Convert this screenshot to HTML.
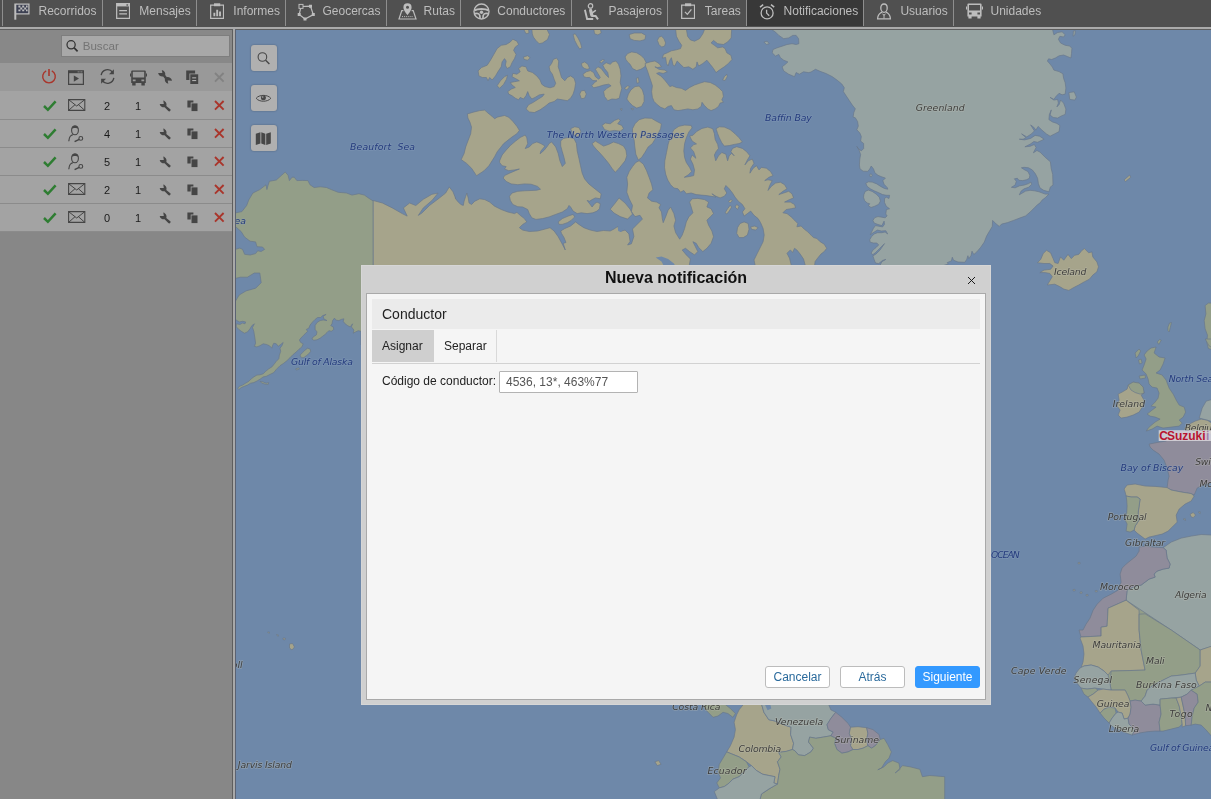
<!DOCTYPE html>
<html lang="es"><head><meta charset="utf-8"><title>Notificaciones</title>
<style>
*{box-sizing:border-box;margin:0;padding:0}
html,body{width:1211px;height:799px;overflow:hidden;background:#999;font-family:"Liberation Sans",Arial,sans-serif;}
#nav{position:absolute;left:0;top:0;width:1211px;height:27px;background:#505050;z-index:5}
#navline{position:absolute;left:0;top:26px;width:1211px;height:4px;background:#aaa;border-top:1px solid #505050;border-bottom:1px solid #5e5e5e;z-index:5}
.sep{position:absolute;top:0;width:1px;height:26px;background:#8e8e8e}
.act{position:absolute;top:0;height:26px;background:#383838}
.tl{filter:grayscale(1);position:absolute;top:3px;color:#bdbdbd;font-size:12px;line-height:16px;white-space:nowrap}
#left{position:absolute;left:0;top:29px;width:232px;height:770px;background:#878787;}
#srow{position:absolute;left:0;top:0;width:232px;height:34px;background:#888}
#sbox{position:absolute;left:61px;top:6px;width:169px;height:22px;background:#a8a8a8;border:1px solid #7e7e7e;color:#747474;font-size:11.6px;line-height:20px;padding-left:20.7px}
#hrow{position:absolute;left:0;top:34px;width:232px;height:28px;background:#999}
.rsep{position:absolute;left:0;width:232px;height:1px;background:#8b8b8b}
.row{position:absolute;left:0;width:232px;height:28px;background:#a3a3a3;font-size:11px;color:#1a1a1a}
.row b{position:absolute;top:1.5px;line-height:27px;font-weight:normal;width:20px;text-align:center}
.ic{position:absolute}
#div{position:absolute;left:232px;top:29px;width:4px;height:770px;background:#a8a8a8;border-left:1px solid #5e5e5e;border-right:1px solid #5b6272;z-index:6}
#map{position:absolute;left:235px;top:29px;width:976px;height:770px;background:#6e88a9;overflow:hidden}
.mbtn{position:absolute;left:16px;width:26px;height:26px;background:#b0b0b0;border-radius:3px;box-shadow:0 0 2px rgba(0,0,0,.3)}
#dlg{position:absolute;left:361px;top:265px;width:630px;height:440px;background:#d0d0d0;box-shadow:inset 0 0 0 1px #d6d6d6}
#dlg h1{position:absolute;left:0;top:3px;width:630px;text-align:center;font-size:16px;font-weight:bold;color:#111;line-height:20px}
#cls{position:absolute;left:606px;top:11px;width:9px;height:9px}
#body{position:absolute;left:5px;top:28px;width:620px;height:407px;background:#f5f5f5;border:1px solid #a9a9a9}
#sec{position:absolute;left:5px;top:5px;width:608px;height:30px;background:#ebebeb;font-size:14px;color:#222;line-height:30px;padding-left:10px}
#t1{position:absolute;left:5px;top:36px;width:62px;height:32px;background:#cfcfcf;font-size:12px;color:#222;line-height:32px;padding-left:10px}
#t2{position:absolute;left:67px;top:36px;width:63px;height:32px;border-right:1px solid #d9d9d9;font-size:12px;color:#222;line-height:32px;padding-left:10px}
#tl{position:absolute;left:5px;top:69px;width:608px;height:1px;background:#d2d2d2}
#lbl{position:absolute;left:15px;top:79px;font-size:12px;color:#222;line-height:16px;white-space:nowrap}
#inp{position:absolute;left:132px;top:77px;width:139px;height:22px;background:#fff;border:1px solid #b3b3b3;font-size:12px;color:#555;line-height:20px;padding-left:6px;border-radius:1px}
.btn{position:absolute;top:372px;height:22px;width:65px;border:1px solid #bcbcbc;background:#fff;border-radius:3px;font-size:12px;color:#2a6a9c;text-align:center;line-height:20px}
.btn.pri{background:#3399ff;border-color:#3399ff;color:#fff}
.row b,#lbl,#sec,#t1,#t2,#dlg h1,#inp,#sbox{filter:grayscale(1)}
.btn{filter:brightness(1.001)}
</style></head><body>
<div id="nav">
<div class="sep" style="left:2px"></div>
<div class="sep" style="left:102px"></div>
<svg class="ic" style="left:13.5px;top:2.5px" width="16" height="17" viewBox="0 0 16 17"><rect x="1.5" y="1" width="13.4" height="9.8" fill="#3c4052"/><path d="M1.3 0.5V16.7" fill="none" stroke="#bdbdbd" stroke-width="2" /><path d="M2 1.1H14.9V10.9H2" fill="none" stroke="#bdbdbd" stroke-width="1.3" /><path d="M4.4 2.6h2v1.9h-2zM8.2 2.6h2v1.9h-2zM6.3 4.5h1.9v1.9h-1.9zM10.2 4.5h1.9v1.9h-1.9zM4.4 6.4h2v1.9h-2zM8.2 6.4h2v1.9h-2zM12 2.6h1.6v1.9h-1.6zM12 6.4h1.6v1.9h-1.6z" fill="#bdbdbd"/></svg>
<span class="tl" style="left:38.5px">Recorridos</span>
<div class="sep" style="left:196px"></div>
<svg class="ic" style="left:115.6px;top:2.6px" width="14.2" height="16.1" viewBox="0 0 15 17"><path d="M0.7 0.7H14.3V16.3H0.7Z" fill="none" stroke="#bdbdbd" stroke-width="1.3" /><path d="M0.7 0.7H14.3V3.6H0.7Z" fill="#bdbdbd"/><rect x="11" y="1.4" width="1.8" height="1.4" fill="#505050"/><path d="M3.4 8H11.6M3.4 11.6H11.6" fill="none" stroke="#bdbdbd" stroke-width="1.3" /></svg>
<span class="tl" style="left:139.3px">Mensajes</span>
<div class="sep" style="left:285px"></div>
<svg class="ic" style="left:209.6px;top:2.7px" width="14.2" height="16.1" viewBox="0 0 15 17"><path d="M0.7 2.2H14.3V16.3H0.7Z" fill="none" stroke="#bdbdbd" stroke-width="1.3" /><path d="M4.2 0.3H10.8V3.4H4.2Z" fill="#bdbdbd"/><path d="M3.6 10.2h2v3.8h-2zM6.6 7.2h2v6.8h-2zM9.6 9h2v5h-2z" fill="#bdbdbd"/></svg>
<span class="tl" style="left:233.3px">Informes</span>
<div class="sep" style="left:386px"></div>
<svg class="ic" style="left:296.5px;top:2.5px" width="19" height="18" viewBox="0 0 19 18"><path d="M4 3.5L13.5 3.2L16.3 11.6L8 16L2.2 11.5Z" fill="none" stroke="#bdbdbd" stroke-width="1.2" /><rect x="2" y="1.4" width="4" height="4" fill="#505050" stroke="#bdbdbd" stroke-width="1"/><path d="M12 1.7h3v3h-3zM14.8 10.1h3v3h-3zM6.5 14.5h3v3h-3zM0.7 10h3v3h-3z" fill="#bdbdbd"/></svg>
<span class="tl" style="left:322.5px">Geocercas</span>
<div class="sep" style="left:460px"></div>
<svg class="ic" style="left:397.5px;top:1.5px" width="19" height="18" viewBox="0 0 19 18"><path d="M5.4 8.6H3.8L1 17H18L15.2 8.6H13.6" fill="none" stroke="#bdbdbd" stroke-width="1.2" /><path d="M9.5 13C9.5 13 5.4 8.4 5.4 5.4A4.1 4.1 0 0 1 13.6 5.4C13.6 8.4 9.5 13 9.5 13Z" fill="#bdbdbd"/><circle cx="9.5" cy="5.3" r="1.5" fill="#505050"/><path d="M4 14.6H15" fill="none" stroke="#bdbdbd" stroke-width="1" stroke-dasharray="1 1.1"/></svg>
<span class="tl" style="left:423.6px">Rutas</span>
<div class="sep" style="left:571px"></div>
<svg class="ic" style="left:472.5px;top:3px" width="17" height="17" viewBox="0 0 17 17"><circle cx="8.5" cy="8.5" r="7.5" fill="none" stroke="#bdbdbd" stroke-width="1.4"/><path d="M1.6 7.4C4.4 5.6 12.6 5.6 15.4 7.4" fill="none" stroke="#bdbdbd" stroke-width="2" /><path d="M2 10.6C4.6 9.9 6.2 10.4 6.8 12.4L7.1 15.6M15 10.6C12.4 9.9 10.8 10.4 10.2 12.4L9.9 15.6" fill="none" stroke="#bdbdbd" stroke-width="1.7" /><circle cx="8.5" cy="9.3" r="1.7" fill="#bdbdbd"/></svg>
<span class="tl" style="left:497.3px">Conductores</span>
<div class="sep" style="left:667px"></div>
<svg class="ic" style="left:584px;top:2.5px" width="16" height="17" viewBox="0 0 16 17"><circle cx="6.5" cy="2.9" r="2.2" fill="none" stroke="#bdbdbd" stroke-width="1.2"/><path d="M0.9 6.8L3.1 16H9.2" fill="none" stroke="#bdbdbd" stroke-width="1.9" /><path d="M6.6 7.4L7.8 12" fill="none" stroke="#bdbdbd" stroke-width="3.2" stroke-linecap="round"/><path d="M7.6 12.9H11.6L14 16.4" fill="none" stroke="#bdbdbd" stroke-width="2" /><path d="M8.6 9.6L11.4 7.6" fill="none" stroke="#bdbdbd" stroke-width="1.5" stroke-linecap="round"/></svg>
<span class="tl" style="left:608.6px">Pasajeros</span>
<div class="sep" style="left:746px"></div>
<svg class="ic" style="left:680.8px;top:2.7px" width="14.2" height="16.1" viewBox="0 0 15 17"><path d="M0.7 2.2H14.3V16.3H0.7Z" fill="none" stroke="#bdbdbd" stroke-width="1.3" /><path d="M4.2 0.3H10.8V3.4H4.2Z" fill="#bdbdbd"/><path d="M4.2 9.4L6.7 12L11 6.8" fill="none" stroke="#bdbdbd" stroke-width="1.4" /></svg>
<span class="tl" style="left:704.8px">Tareas</span>
<div class="act" style="left:747px;width:116px"></div>
<div class="sep" style="left:863px"></div>
<svg class="ic" style="left:759px;top:2.5px" width="17" height="17" viewBox="0 0 17 17"><circle cx="8.1" cy="9.9" r="6" fill="none" stroke="#bdbdbd" stroke-width="1.3"/><path d="M7.6 6.8V10.1L10.2 12.7" fill="none" stroke="#bdbdbd" stroke-width="1.3" /><path d="M1 4.2L4.2 1.6M15.2 4.2L12 1.6" fill="none" stroke="#bdbdbd" stroke-width="1.5" /></svg>
<span class="tl" style="left:783.6px">Notificaciones</span>
<div class="sep" style="left:953px"></div>
<svg class="ic" style="left:876px;top:2.5px" width="16" height="17" viewBox="0 0 16 17"><path d="M8 1C10.1 1 11.2 2.6 11.2 4.9C11.2 7.2 9.9 9.3 8 9.3C6.1 9.3 4.8 7.2 4.8 4.9C4.8 2.6 5.9 1 8 1Z" fill="none" stroke="#bdbdbd" stroke-width="1.3" /><path d="M6 9C4.4 10.4 1.8 10.4 1.6 15.9H14.4C14.2 10.4 11.6 10.4 10 9" fill="none" stroke="#bdbdbd" stroke-width="1.3" /><path d="M8 11.4V15.6M6.4 10.6L8 12.4L9.6 10.6" fill="none" stroke="#bdbdbd" stroke-width="1" /></svg>
<span class="tl" style="left:900.4px">Usuarios</span>
<svg class="ic" style="left:965.5px;top:3px" width="17" height="16" viewBox="0 0 17 16"><path d="M2.4 0.4H14.6Q15.6 0.4 15.6 1.4V13.4H14.6V15.6H11.4V13.4H5.6V15.6H2.4V13.4H1.4V1.4Q1.4 0.4 2.4 0.4ZM3 2V7.6H14V2ZM3 9.6V11.4H5.6V9.6ZM11.4 9.6V11.4H14V9.6Z" fill="#bdbdbd"/><path d="M0 3.4H1V6.6H0ZM16 3.4H17V6.6H16Z" fill="#bdbdbd"/></svg>
<span class="tl" style="left:990.5px">Unidades</span>
</div>
<div id="navline"></div>
<div id="left">
 <div id="srow"><div id="sbox">Buscar<svg class="ic" style="left:2px;top:2px" width="17" height="17" viewBox="0 0 17 17"><circle cx="7.1" cy="6.8" r="4.1" fill="none" stroke="#333" stroke-width="1.25"/><path d="M10.2 9.9L13.6 13.3" stroke="#333" stroke-width="1.7"/></svg></div></div>
 <div id="hrow"><svg class="ic" style="left:41px;top:5.4px" width="16" height="16" viewBox="0 0 16 16"><path d="M5.2 2.9A6.3 6.3 0 1 0 10.8 2.9" fill="none" stroke="#a9352b" stroke-width="1.4" /><path d="M8 0.9V8" fill="none" stroke="#a9352b" stroke-width="1.6" /></svg><svg class="ic" style="left:67.6px;top:6.5px" width="17" height="16" viewBox="0 0 17 16"><path d="M0.6 0.8H15.4V14.4H0.6Z" fill="none" stroke="#454545" stroke-width="1.2" /><path d="M0.6 0.8H15.4V3.2H0.6Z" fill="#454545"/><rect x="9.6" y="1.5" width="2" height="0.8" fill="#999"/><rect x="12.4" y="1.5" width="2" height="0.8" fill="#999"/><path d="M5.8 5.4L11 8.6L5.8 11.8Z" fill="#454545"/></svg><svg class="ic" style="left:98.5px;top:5.2px" width="17" height="17" viewBox="0 0 17 17"><path d="M2.2 7.2A6.4 6.4 0 0 1 13.6 4.2" fill="none" stroke="#454545" stroke-width="1.4" /><path d="M14.9 1.2V6.2H10Z" fill="#454545"/><path d="M14.8 9.8A6.4 6.4 0 0 1 3.4 12.8" fill="none" stroke="#454545" stroke-width="1.4" /><path d="M2.1 15.8V10.8H7Z" fill="#454545"/></svg><svg class="ic" style="left:129.6px;top:6.6px" width="17" height="16" viewBox="0 0 17 16"><path d="M2.2 0.4H14.8Q15.8 0.4 15.8 1.4V13H14.8V15.4H11.4V13H5.6V15.4H2.2V13H1.2V1.4Q1.2 0.4 2.2 0.4ZM2.8 1.8V7.6H14.2V1.8ZM2.8 9.4V11.2H5.6V9.4ZM11.4 9.4V11.2H14.2V9.4Z" fill="#454545"/><path d="M0 3.4H1V6.6H0ZM16 3.4H17V6.6H16Z" fill="#454545"/></svg><svg class="ic" style="left:157px;top:6px" width="16" height="16" viewBox="0 0 16 16"><path d="M4.8 0.9C7.6 1.5 8.7 4.2 8.2 5.9L9.9 8.2C11.8 7.7 14.5 9.1 15 11.7L10.7 11.5L11.3 14.7C8.5 14.2 7.4 11.4 7.9 9.7L6.2 7.4C4.3 7.9 1.6 6.6 1.1 3.9L5.4 4.1Z" fill="#454545"/></svg><svg class="ic" style="left:185.8px;top:6.8px" width="13" height="15" viewBox="0 0 13 15"><path d="M0.2 0.5H9.1V3.4H3.4V10.1H0.2Z" fill="#454545"/><path d="M4.3 4.3H12.2V14H4.3Z" fill="#454545"/><rect x="6.2" y="7.3" width="4" height="1.1" fill="#b0b0b0"/><rect x="6.2" y="10" width="4" height="1.1" fill="#b0b0b0"/></svg><svg class="ic" style="left:213.6px;top:8.6px" width="11" height="11" viewBox="0 0 11 11"><path d="M1 1L9.6 9.6M9.6 1L1 9.6" fill="none" stroke="#828282" stroke-width="1.9" /></svg></div>
<div class="row" style="top:62px"><svg class="ic" style="left:42.6px;top:9px" width="14" height="12" viewBox="0 0 14 12"><path d="M1 6L4.9 9.8L12.6 1.4" fill="none" stroke="#2e7d32" stroke-width="2.5" /></svg><svg class="ic" style="left:67.9px;top:8.3px" width="18" height="13" viewBox="0 0 18 13"><path d="M0.6 0.6H16.8V11.4H0.6Z" fill="none" stroke="#454545" stroke-width="1.1" /><path d="M0.8 0.8L8.7 7L16.6 0.8M0.8 11.2L7 5.7M16.6 11.2L10.4 5.7" fill="none" stroke="#454545" stroke-width="1" /></svg><b style="left:97px">2</b><b style="left:128px">1</b><svg class="ic" style="left:158.6px;top:8.6px" width="13" height="13" viewBox="0 0 13 13"><path d="M4.3 0.4C6.9 1.1 8.1 4 7.3 5.9L11.6 9.6C11.9 11 10.2 12 9.3 11L5.6 7.3C3.6 7.7 1 6.3 0.7 3.9L4.8 3.9Z" fill="#454545"/></svg><svg class="ic" style="left:186.6px;top:8.8px" width="11" height="12" viewBox="0 0 11 12"><path d="M0.4 0.4H6.4V2.6H3.7V7.6H0.4Z" fill="#454545"/><path d="M4.5 3.4H10.5V11.1H4.5Z" fill="#454545"/></svg><svg class="ic" style="left:214.1px;top:9.3px" width="11" height="11" viewBox="0 0 11 11"><path d="M1 1L9.6 9.6M9.6 1L1 9.6" fill="none" stroke="#a9352b" stroke-width="1.9" /></svg></div>
<div class="row" style="top:90px"><svg class="ic" style="left:42.6px;top:9px" width="14" height="12" viewBox="0 0 14 12"><path d="M1 6L4.9 9.8L12.6 1.4" fill="none" stroke="#2e7d32" stroke-width="2.5" /></svg><svg class="ic" style="left:68.4px;top:5.6px" width="16" height="18" viewBox="0 0 16 18"><path d="M7 1C9.2 1 10.4 2.8 10.4 5.2C10.4 7.6 9 9.8 7 9.8C5 9.8 3.6 7.6 3.6 5.2C3.6 2.8 4.8 1 7 1Z" fill="none" stroke="#454545" stroke-width="1.1" /><path d="M3.8 4C4 1.6 5.4 0.6 7 0.6C8.6 0.6 10 1.6 10.2 4C9 2.6 5 2.6 3.8 4Z" fill="#454545"/><path d="M4.8 9.6C2.4 10.4 1.2 11.4 0.8 16.2" fill="none" stroke="#454545" stroke-width="1.2" /><circle cx="12.8" cy="13.4" r="1.9" fill="none" stroke="#454545" stroke-width="1.1"/><path d="M11.2 14.4L6.6 16.6" fill="none" stroke="#454545" stroke-width="1.5" /></svg><b style="left:97px">4</b><b style="left:128px">1</b><svg class="ic" style="left:158.6px;top:8.6px" width="13" height="13" viewBox="0 0 13 13"><path d="M4.3 0.4C6.9 1.1 8.1 4 7.3 5.9L11.6 9.6C11.9 11 10.2 12 9.3 11L5.6 7.3C3.6 7.7 1 6.3 0.7 3.9L4.8 3.9Z" fill="#454545"/></svg><svg class="ic" style="left:186.6px;top:8.8px" width="11" height="12" viewBox="0 0 11 12"><path d="M0.4 0.4H6.4V2.6H3.7V7.6H0.4Z" fill="#454545"/><path d="M4.5 3.4H10.5V11.1H4.5Z" fill="#454545"/></svg><svg class="ic" style="left:214.1px;top:9.3px" width="11" height="11" viewBox="0 0 11 11"><path d="M1 1L9.6 9.6M9.6 1L1 9.6" fill="none" stroke="#a9352b" stroke-width="1.9" /></svg></div>
<div class="row" style="top:118px"><svg class="ic" style="left:42.6px;top:9px" width="14" height="12" viewBox="0 0 14 12"><path d="M1 6L4.9 9.8L12.6 1.4" fill="none" stroke="#2e7d32" stroke-width="2.5" /></svg><svg class="ic" style="left:68.4px;top:5.6px" width="16" height="18" viewBox="0 0 16 18"><path d="M7 1C9.2 1 10.4 2.8 10.4 5.2C10.4 7.6 9 9.8 7 9.8C5 9.8 3.6 7.6 3.6 5.2C3.6 2.8 4.8 1 7 1Z" fill="none" stroke="#454545" stroke-width="1.1" /><path d="M3.8 4C4 1.6 5.4 0.6 7 0.6C8.6 0.6 10 1.6 10.2 4C9 2.6 5 2.6 3.8 4Z" fill="#454545"/><path d="M4.8 9.6C2.4 10.4 1.2 11.4 0.8 16.2" fill="none" stroke="#454545" stroke-width="1.2" /><circle cx="12.8" cy="13.4" r="1.9" fill="none" stroke="#454545" stroke-width="1.1"/><path d="M11.2 14.4L6.6 16.6" fill="none" stroke="#454545" stroke-width="1.5" /></svg><b style="left:97px">5</b><b style="left:128px">1</b><svg class="ic" style="left:158.6px;top:8.6px" width="13" height="13" viewBox="0 0 13 13"><path d="M4.3 0.4C6.9 1.1 8.1 4 7.3 5.9L11.6 9.6C11.9 11 10.2 12 9.3 11L5.6 7.3C3.6 7.7 1 6.3 0.7 3.9L4.8 3.9Z" fill="#454545"/></svg><svg class="ic" style="left:186.6px;top:8.8px" width="11" height="12" viewBox="0 0 11 12"><path d="M0.4 0.4H6.4V2.6H3.7V7.6H0.4Z" fill="#454545"/><path d="M4.5 3.4H10.5V11.1H4.5Z" fill="#454545"/></svg><svg class="ic" style="left:214.1px;top:9.3px" width="11" height="11" viewBox="0 0 11 11"><path d="M1 1L9.6 9.6M9.6 1L1 9.6" fill="none" stroke="#a9352b" stroke-width="1.9" /></svg></div>
<div class="row" style="top:146px"><svg class="ic" style="left:42.6px;top:9px" width="14" height="12" viewBox="0 0 14 12"><path d="M1 6L4.9 9.8L12.6 1.4" fill="none" stroke="#2e7d32" stroke-width="2.5" /></svg><svg class="ic" style="left:67.9px;top:8.3px" width="18" height="13" viewBox="0 0 18 13"><path d="M0.6 0.6H16.8V11.4H0.6Z" fill="none" stroke="#454545" stroke-width="1.1" /><path d="M0.8 0.8L8.7 7L16.6 0.8M0.8 11.2L7 5.7M16.6 11.2L10.4 5.7" fill="none" stroke="#454545" stroke-width="1" /></svg><b style="left:97px">2</b><b style="left:128px">1</b><svg class="ic" style="left:158.6px;top:8.6px" width="13" height="13" viewBox="0 0 13 13"><path d="M4.3 0.4C6.9 1.1 8.1 4 7.3 5.9L11.6 9.6C11.9 11 10.2 12 9.3 11L5.6 7.3C3.6 7.7 1 6.3 0.7 3.9L4.8 3.9Z" fill="#454545"/></svg><svg class="ic" style="left:186.6px;top:8.8px" width="11" height="12" viewBox="0 0 11 12"><path d="M0.4 0.4H6.4V2.6H3.7V7.6H0.4Z" fill="#454545"/><path d="M4.5 3.4H10.5V11.1H4.5Z" fill="#454545"/></svg><svg class="ic" style="left:214.1px;top:9.3px" width="11" height="11" viewBox="0 0 11 11"><path d="M1 1L9.6 9.6M9.6 1L1 9.6" fill="none" stroke="#a9352b" stroke-width="1.9" /></svg></div>
<div class="row" style="top:174px"><svg class="ic" style="left:42.6px;top:9px" width="14" height="12" viewBox="0 0 14 12"><path d="M1 6L4.9 9.8L12.6 1.4" fill="none" stroke="#2e7d32" stroke-width="2.5" /></svg><svg class="ic" style="left:67.9px;top:8.3px" width="18" height="13" viewBox="0 0 18 13"><path d="M0.6 0.6H16.8V11.4H0.6Z" fill="none" stroke="#454545" stroke-width="1.1" /><path d="M0.8 0.8L8.7 7L16.6 0.8M0.8 11.2L7 5.7M16.6 11.2L10.4 5.7" fill="none" stroke="#454545" stroke-width="1" /></svg><b style="left:97px">0</b><b style="left:128px">1</b><svg class="ic" style="left:158.6px;top:8.6px" width="13" height="13" viewBox="0 0 13 13"><path d="M4.3 0.4C6.9 1.1 8.1 4 7.3 5.9L11.6 9.6C11.9 11 10.2 12 9.3 11L5.6 7.3C3.6 7.7 1 6.3 0.7 3.9L4.8 3.9Z" fill="#454545"/></svg><svg class="ic" style="left:186.6px;top:8.8px" width="11" height="12" viewBox="0 0 11 12"><path d="M0.4 0.4H6.4V2.6H3.7V7.6H0.4Z" fill="#454545"/><path d="M4.5 3.4H10.5V11.1H4.5Z" fill="#454545"/></svg><svg class="ic" style="left:214.1px;top:9.3px" width="11" height="11" viewBox="0 0 11 11"><path d="M1 1L9.6 9.6M9.6 1L1 9.6" fill="none" stroke="#a9352b" stroke-width="1.9" /></svg></div>
<div class="rsep" style="top:90px"></div>
<div class="rsep" style="top:118px"></div>
<div class="rsep" style="top:146px"></div>
<div class="rsep" style="top:174px"></div>
<div class="rsep" style="top:202px"></div>
</div>
<div id="div"></div>
<div id="map">
<svg width="976" height="770" viewBox="0 0 976 770" style="position:absolute;left:0;top:0">
<path d="M0.0 184.0L6.9 182.6L11.7 176.4L13.8 170.9L17.9 164.0L24.8 160.6L31.0 155.8L31.9 160.6L33.0 156.5L34.4 152.3L41.3 151.0L46.8 146.1L50.2 143.1L53.0 146.1L54.4 151.6L57.1 148.2L59.2 148.2L61.9 151.6L67.4 151.4L72.9 151.6L75.0 155.8L79.1 158.5L85.3 157.8L91.5 158.5L96.3 160.6L103.2 163.3L111.5 164.0L117.0 166.1L123.9 164.7L129.4 166.1L134.2 169.5L138.3 172.0L138.3 316.0L126.0 316.0L126.0 302.3L123.2 301.7L120.7 302.9L118.2 304.2L118.9 301.0L116.4 297.9L117.6 294.8L115.1 297.9L112.6 296.6L110.1 294.8L108.2 292.3L108.9 289.8L106.4 290.4L103.8 291.6L100.7 291.0L99.5 289.1L97.6 291.6L97.0 294.8L95.7 296.6L98.2 297.9L98.8 300.4L96.3 302.3L93.8 301.7L92.0 303.5L90.1 305.4L87.6 307.3L85.1 309.2L82.0 310.8L78.8 311.3L76.9 310.0L78.2 307.9L81.3 306.0L82.0 302.9L80.1 300.4L80.1 296.6L82.0 293.5L85.1 291.6L88.2 291.0L92.0 291.6L88.8 289.8L88.2 287.3L91.1 285.4L87.6 286.6L85.7 288.5L82.6 288.5L80.1 290.4L77.6 292.9L75.1 296.0L73.8 299.2L71.3 300.4L72.6 302.3L70.1 304.8L68.2 306.7L66.3 308.5L64.4 311.0L65.7 313.5L68.2 314.8L66.9 317.9L63.8 320.4L61.3 322.9L58.2 325.4L55.1 328.6L51.9 331.7L48.8 334.2L45.0 336.7L41.3 340.4L38.8 343.6L35.0 345.4L31.3 347.3L28.2 347.9L25.6 349.8L22.5 351.7L18.8 353.6L15.6 354.2L12.5 356.1L9.4 357.3L6.3 358.6L3.8 360.5L2.8 359.2L4.4 357.3L7.5 356.1L10.6 354.2L13.8 352.3L16.3 349.8L18.8 347.9L21.9 346.1L25.0 345.8L28.2 344.8L30.7 342.3L33.8 339.8L36.9 337.9L39.4 334.8L41.3 332.3L43.8 329.8L44.4 326.1L45.7 322.3L45.0 319.2L46.9 316.7L48.2 313.5L45.7 315.4L43.2 317.3L41.3 314.8L38.8 314.2L37.5 316.7L36.9 319.2L34.4 316.7L31.3 315.4L28.2 314.8L25.0 316.7L21.9 317.9L19.4 317.3L20.6 314.2L20.0 309.8L19.4 306.0L18.8 302.3L17.5 298.5L19.4 294.8L16.9 296.6L15.0 299.8L12.5 302.9L9.4 304.2L6.3 302.3L3.8 300.4L1.3 297.9L1.3 294.8L5.0 295.4L7.5 294.1L10.0 294.8L10.6 292.9L7.5 292.3L4.4 292.9L1.9 291.6L0.0 289.8L0.0 273.0L4.1 266.1L11.0 261.9L20.7 259.2L26.2 253.7L24.8 244.0L19.3 244.0L12.4 248.2L5.5 248.2L0.0 249.5L0.0 220.4L4.8 219.1L7.6 220.4L9.6 225.3L15.1 226.0L20.6 224.6L22.7 221.8L26.1 222.5L29.6 220.4L27.5 218.0L22.0 217.7L20.6 212.9L15.1 212.2L9.6 208.1L6.2 202.6L1.4 198.4L0.0 198.4Z" fill="#939e88" stroke="#68788a" stroke-width=".9" stroke-opacity=".75" stroke-linejoin="round"/>
<path d="M65.1 326.1L67.6 323.6L70.1 321.0L72.6 319.2L75.1 320.0L75.7 322.3L73.8 324.8L71.3 326.7L68.8 328.6L66.3 328.8Z" fill="#939e88" stroke="#68788a" stroke-width=".9" stroke-opacity=".75" stroke-linejoin="round"/>
<path d="M60.7 339.8L63.8 338.8L64.4 340.1L61.3 341.1Z" fill="#939e88" stroke="#68788a" stroke-width=".9" stroke-opacity=".75" stroke-linejoin="round"/>
<path d="M25.0 352.3L28.2 353.0L31.3 354.2L33.8 353.6L33.2 355.5L30.0 355.1L26.9 354.2Z" fill="#939e88" stroke="#68788a" stroke-width=".9" stroke-opacity=".75" stroke-linejoin="round"/>
<path d="M138.2 171.5L147.4 174.0L157.3 178.9L167.2 184.6L172.2 187.1L168.4 178.9L174.6 174.0L180.8 176.5L188.3 170.3L196.9 165.3L203.1 164.1L196.9 171.5L188.3 178.9L183.3 186.4L187.0 183.9L194.5 176.5L204.4 169.0L210.6 164.1L214.3 157.9L218.0 162.8L220.5 169.0L220.0 168.9L222.5 172.2L225.8 175.5L228.3 176.4L229.1 172.2L230.7 167.3L231.9 164.0L233.2 168.9L234.0 173.9L236.5 175.5L239.8 172.2L244.8 169.8L249.7 170.6L254.7 173.1L259.6 177.2L266.2 180.5L272.8 183.0L279.5 184.6L281.9 183.3L285.2 186.3L289.4 189.6L291.8 192.9L287.7 195.4L284.4 198.7L287.7 201.1L294.3 202.5L302.6 202.0L309.2 200.3L315.0 198.7L319.1 202.0L323.2 207.7L327.3 215.2L330.3 221.0L328.2 214.3L331.0 213.5L329.0 208.6L326.5 204.4L325.7 202.0L329.8 199.5L335.6 197.0L340.6 192.9L343.9 195.4L348.8 198.7L355.4 201.1L362.0 202.5L368.6 201.5L375.2 202.0L379.0 200.0L382.7 197.5L385.2 202.5L390.1 201.1L393.9 204.9L395.1 212.4L392.6 216.0L396.4 214.8L398.9 207.4L397.5 200.0L401.3 196.2L407.4 190.1L405.0 186.3L400.0 187.6L396.4 182.6L397.5 176.4L394.2 169.8L391.8 163.2L392.6 154.9L391.8 148.3L394.2 142.5L397.5 137.6L400.8 133.4L404.1 131.8L408.3 135.1L411.6 141.7L414.1 148.3L416.5 154.9L417.9 160.7L414.1 164.0L412.5 168.9L416.6 172.2L421.6 173.1L425.7 175.5L424.0 178.8L426.5 183.0L427.3 189.6L428.2 193.7L430.6 187.9L433.1 181.3L435.6 178.0L438.9 184.6L440.6 191.2L438.9 197.0L440.6 203.6L444.7 210.2L447.2 206.1L449.6 199.5L451.3 192.9L453.8 187.9L457.9 183.8L456.2 178.0L454.6 173.1L457.1 169.8L462.8 169.4L469.5 170.6L473.6 173.1L471.9 178.0L476.1 179.7L478.5 184.6L475.2 187.9L471.9 191.2L473.6 196.2L476.9 202.0L478.5 207.7L476.1 214.3L471.9 219.3L467.8 222.6L463.7 218.5L461.2 214.3L457.9 212.7L460.4 217.7L462.8 222.6L459.5 225.9L454.6 222.6L450.5 219.3L447.2 221.0L451.3 225.9L455.4 230.0L453.8 239.1L455.0 316.0L138.3 316.0Z" fill="#a6a48b" stroke="#68788a" stroke-width=".9" stroke-opacity=".75" stroke-linejoin="round"/>
<path d="M420.7 228.4L426.5 227.6L433.1 230.0L438.9 234.5L441.4 239.1L429.8 239.1L426.5 232.5Z" fill="#6e88a9"/>
<path d="M232.4 84.9L238.2 83.2L244.8 81.6L249.7 81.1L253.0 84.1L257.2 87.4L259.6 89.8L262.1 88.2L265.4 87.4L269.5 86.5L273.7 88.2L277.8 92.3L281.9 97.3L284.4 101.4L281.9 104.7L277.0 108.0L272.8 111.3L268.7 114.6L265.4 118.7L262.1 122.9L259.6 127.8L253.9 136.8L249.0 141.8L241.5 146.7L236.6 139.3L231.6 134.4L226.2 130.6L229.1 124.5L230.7 117.9L233.2 111.3L235.7 104.7L236.5 98.1L234.9 93.1L232.9 89.0Z" fill="#a6a48b" stroke="#68788a" stroke-width=".9" stroke-opacity=".75" stroke-linejoin="round"/>
<path d="M264.6 131.8L267.1 126.0L271.2 121.0L275.3 116.6L280.3 112.3L285.2 108.5L290.2 106.0L291.8 108.8L292.7 114.6L290.2 119.6L294.3 117.9L297.6 114.6L301.8 112.9L305.9 114.6L310.0 117.1L305.9 122.0L305.1 124.8L309.2 121.2L312.5 117.1L314.1 114.6L316.6 112.9L320.7 117.9L323.2 124.5L324.9 131.8L327.3 137.6L330.3 134.3L329.0 128.5L327.3 122.7L325.7 116.9L325.7 112.0L328.2 109.5L334.0 108.3L338.9 109.5L341.4 114.4L342.2 121.9L343.9 129.3L345.5 136.7L347.2 144.2L349.6 149.9L353.8 154.9L357.9 158.2L362.0 161.5L366.2 164.8L365.3 169.8L360.4 168.9L357.1 170.6L354.6 172.2L352.1 171.4L354.6 174.7L357.1 178.0L359.6 174.7L362.0 173.1L365.3 174.7L364.5 179.7L362.0 182.1L357.9 183.8L352.1 184.6L346.3 183.8L342.2 184.6L338.1 182.1L335.6 178.0L334.0 176.4L332.3 179.7L327.3 183.0L320.7 185.4L314.1 187.9L307.5 189.6L300.9 190.4L296.8 188.8L294.3 184.6L292.7 180.5L287.7 178.0L282.8 177.7L277.8 175.5L275.3 171.4L274.5 167.3L277.0 164.0L282.8 162.3L289.4 161.8L296.0 161.5L301.8 161.2L305.5 160.2L302.6 157.4L296.0 155.2L289.4 154.9L282.8 155.7L276.2 154.9L271.2 152.4L268.2 149.1L269.5 146.6L274.5 144.2L280.3 141.7L284.4 140.0L279.5 140.9L273.7 141.7L269.5 140.0L271.2 137.6L267.1 136.7L264.6 133.4Z" fill="#a6a48b" stroke="#68788a" stroke-width=".9" stroke-opacity=".75" stroke-linejoin="round"/>
<path d="M323.2 192.9L327.3 189.6L333.1 187.1L338.1 185.4L339.7 187.9L336.4 191.2L332.3 193.7L327.3 195.4L324.0 195.4Z" fill="#a6a48b" stroke="#68788a" stroke-width=".9" stroke-opacity=".75" stroke-linejoin="round"/>
<path d="M335.6 99.7L339.7 97.8L343.9 98.6L345.8 102.2L344.7 106.3L341.4 108.0L338.1 105.5Z" fill="#a6a48b" stroke="#68788a" stroke-width=".9" stroke-opacity=".75" stroke-linejoin="round"/>
<path d="M375.2 180.2L380.2 174.1L384.0 168.9L390.1 174.1L395.1 180.2L397.5 185.1L392.6 190.1L385.2 187.6L379.0 184.0Z" fill="#a6a48b" stroke="#68788a" stroke-width=".9" stroke-opacity=".75" stroke-linejoin="round"/>
<path d="M382.7 198.2L385.6 197.5L387.8 200.3L386.0 203.1L383.2 202.1Z" fill="#6e88a9"/>
<path d="M357.1 114.6L360.4 112.1L364.5 114.6L368.6 117.1L373.6 115.4L378.5 113.0L383.5 114.6L388.5 117.1L390.9 121.0L391.8 126.8L390.1 131.8L386.8 135.9L383.5 140.0L380.2 143.3L376.9 139.2L373.6 134.3L369.5 129.3L365.3 124.4L361.2 120.2L358.4 116.9Z" fill="#a6a48b" stroke="#68788a" stroke-width=".9" stroke-opacity=".75" stroke-linejoin="round"/>
<path d="M367.0 96.4L370.3 94.0L375.2 94.8L379.4 91.5L383.5 89.8L385.2 91.5L382.7 94.8L386.8 96.4L388.5 99.7L385.2 102.2L379.4 101.4L374.4 102.2L369.5 100.6Z" fill="#a6a48b" stroke="#68788a" stroke-width=".9" stroke-opacity=".75" stroke-linejoin="round"/>
<path d="M397.5 99.7L400.0 94.8L404.1 90.7L409.9 89.0L416.5 89.3L421.5 92.3L426.4 94.8L425.6 99.7L423.1 104.7L419.8 110.5L417.4 114.6L413.2 117.9L409.9 123.5L406.6 128.5L403.3 131.0L400.8 125.2L399.7 116.9L399.2 111.3L397.5 106.3Z" fill="#a6a48b" stroke="#68788a" stroke-width=".9" stroke-opacity=".75" stroke-linejoin="round"/>
<path d="M243.1 41.9L246.4 38.6L252.2 36.2L255.5 31.2L258.8 25.4L262.1 19.6L266.2 16.3L271.2 15.5L275.3 13.0L277.8 10.2L281.9 12.2L283.6 15.5L280.3 18.0L278.6 21.3L281.1 25.4L279.5 29.6L277.0 33.7L275.3 37.8L272.0 39.5L270.4 36.2L271.2 32.0L269.5 29.6L267.1 32.9L266.2 37.8L262.9 42.8L260.5 46.9L257.2 51.0L254.7 48.5L253.0 51.8L251.4 48.5L247.3 48.5L243.9 46.9Z" fill="#a6a48b" stroke="#68788a" stroke-width=".9" stroke-opacity=".75" stroke-linejoin="round"/>
<path d="M262.1 56.8L265.4 51.8L269.5 47.7L272.5 46.1L271.5 50.2L268.7 55.2L264.6 59.3Z" fill="#a6a48b" stroke="#68788a" stroke-width=".9" stroke-opacity=".75" stroke-linejoin="round"/>
<path d="M288.5 27.9L292.7 26.7L295.1 28.7L292.7 31.2L289.0 30.4Z" fill="#a6a48b" stroke="#68788a" stroke-width=".9" stroke-opacity=".75" stroke-linejoin="round"/>
<path d="M272.8 62.6L276.2 60.1L280.3 58.5L277.0 56.0L275.3 53.5L279.5 52.7L284.4 51.8L280.3 49.4L277.0 47.7L277.8 44.4L281.9 45.2L285.2 42.8L283.6 39.5L286.9 37.0L291.0 37.8L292.7 41.9L297.6 43.6L301.8 46.9L305.1 51.0L306.7 55.2L310.0 57.6L315.0 58.8L319.1 57.6L320.7 54.3L319.1 50.2L317.4 45.2L315.0 41.9L314.1 37.8L316.6 34.5L318.3 30.4L321.6 29.1L323.7 32.0L323.2 37.8L324.9 42.8L326.5 48.5L329.8 51.8L332.3 48.5L335.6 46.9L339.2 49.4L340.6 54.3L339.7 60.1L338.1 65.1L335.6 69.2L332.3 71.7L327.3 70.8L322.4 70.0L319.1 72.5L314.1 74.1L310.0 77.4L305.1 80.8L299.3 83.6L294.3 82.9L291.0 79.9L293.5 75.8L298.4 73.3L303.4 70.0L307.5 67.5L309.2 65.1L304.2 65.9L300.1 68.4L296.8 70.0L294.3 66.7L292.7 62.6L291.0 66.7L288.5 70.0L285.2 68.4L283.6 70.8L280.3 69.2L277.0 66.7L273.7 65.1Z" fill="#a6a48b" stroke="#68788a" stroke-width=".9" stroke-opacity=".75" stroke-linejoin="round"/>
<path d="M344.7 65.1L346.3 61.8L349.6 61.4L351.3 65.1L349.6 69.2L346.3 69.7Z" fill="#a6a48b" stroke="#68788a" stroke-width=".9" stroke-opacity=".75" stroke-linejoin="round"/>
<path d="M296.8 -0.2L311.7 -0.2L314.5 5.6L312.5 10.6L307.5 13.9L304.2 14.7L300.9 11.4L298.4 8.1L297.3 4.8Z" fill="#a6a48b" stroke="#68788a" stroke-width=".9" stroke-opacity=".75" stroke-linejoin="round"/>
<path d="M288.5 -0.2L293.5 -0.2L294.0 4.0L291.0 4.8Z" fill="#a6a48b" stroke="#68788a" stroke-width=".9" stroke-opacity=".75" stroke-linejoin="round"/>
<path d="M338.1 5.6L340.2 4.8L343.0 8.9L345.5 13.9L346.8 18.8L344.7 20.1L342.2 16.3L339.7 11.4Z" fill="#a6a48b" stroke="#68788a" stroke-width=".9" stroke-opacity=".75" stroke-linejoin="round"/>
<path d="M358.7 -0.2L365.3 -0.2L366.2 4.0L362.9 5.9L359.6 4.8Z" fill="#a6a48b" stroke="#68788a" stroke-width=".9" stroke-opacity=".75" stroke-linejoin="round"/>
<path d="M394.2 5.6L399.2 4.0L406.6 4.0L410.8 6.4L409.9 10.6L405.0 11.9L399.2 11.4L395.1 9.7Z" fill="#a6a48b" stroke="#68788a" stroke-width=".9" stroke-opacity=".75" stroke-linejoin="round"/>
<path d="M346.3 34.5L349.6 32.9L352.9 35.3L354.6 39.5L352.1 40.3L349.6 39.5L347.2 37.8Z" fill="#a6a48b" stroke="#68788a" stroke-width=".9" stroke-opacity=".75" stroke-linejoin="round"/>
<path d="M364.5 32.9L367.8 30.4L369.5 31.2L366.2 34.0Z" fill="#a6a48b" stroke="#68788a" stroke-width=".9" stroke-opacity=".75" stroke-linejoin="round"/>
<path d="M348.0 45.2L351.3 42.8L355.4 41.6L358.7 43.6L360.4 47.7L363.7 50.2L365.3 48.5L362.9 44.4L360.4 40.3L362.9 37.8L366.2 39.5L368.6 42.8L371.1 46.1L373.6 48.5L372.8 43.6L369.5 39.5L367.8 36.2L371.1 33.7L375.2 35.3L377.7 32.9L381.0 32.0L383.5 35.3L385.2 40.3L386.0 46.9L385.2 53.5L386.8 59.3L385.2 65.1L384.3 69.2L381.0 70.3L376.9 70.0L372.8 71.7L369.5 67.5L368.6 62.6L371.9 59.3L376.1 56.8L373.6 55.2L368.6 56.0L363.7 57.6L358.7 58.8L356.7 56.8L359.6 53.5L362.0 51.8L357.9 51.5L354.6 48.5L351.3 48.5L348.8 47.7Z" fill="#a6a48b" stroke="#68788a" stroke-width=".9" stroke-opacity=".75" stroke-linejoin="round"/>
<path d="M391.8 70.0L393.4 65.1L395.9 60.9L400.0 57.6L404.1 57.1L407.4 60.9L409.1 66.7L409.1 72.5L406.6 77.4L401.7 79.1L397.5 76.6L394.2 73.3Z" fill="#a6a48b" stroke="#68788a" stroke-width=".9" stroke-opacity=".75" stroke-linejoin="round"/>
<path d="M389.3 59.3L392.6 56.8L394.7 57.6L391.8 60.9Z" fill="#a6a48b" stroke="#68788a" stroke-width=".9" stroke-opacity=".75" stroke-linejoin="round"/>
<path d="M401.3 49.4L403.3 48.5L404.1 53.5L402.0 54.3Z" fill="#a6a48b" stroke="#68788a" stroke-width=".9" stroke-opacity=".75" stroke-linejoin="round"/>
<path d="M385.2 79.9L387.1 79.6L386.5 81.6Z" fill="#a6a48b" stroke="#68788a" stroke-width=".9" stroke-opacity=".75" stroke-linejoin="round"/>
<path d="M395.9 79.6L398.4 79.3L398.0 81.1Z" fill="#a6a48b" stroke="#68788a" stroke-width=".9" stroke-opacity=".75" stroke-linejoin="round"/>
<path d="M390.1 27.9L392.6 24.6L396.7 22.9L401.7 23.8L405.8 26.3L409.1 29.6L411.2 33.7L409.9 37.8L405.8 40.3L401.7 41.6L397.5 39.5L395.1 35.3L392.6 32.9L390.9 30.4Z" fill="#a6a48b" stroke="#68788a" stroke-width=".9" stroke-opacity=".75" stroke-linejoin="round"/>
<path d="M422.4 11.4L424.0 8.1L426.5 7.3L429.0 9.7L430.6 13.9L429.5 17.2L426.5 18.0L424.0 15.5Z" fill="#a6a48b" stroke="#68788a" stroke-width=".9" stroke-opacity=".75" stroke-linejoin="round"/>
<path d="M410.0 34.5L415.0 32.9L419.9 32.0L424.0 34.5L426.5 37.8L422.4 38.6L419.9 37.8L424.0 40.3L429.8 41.1L432.3 42.8L428.2 44.4L424.0 43.6L421.6 44.4L425.7 46.9L429.0 50.2L432.3 54.3L434.8 57.6L437.3 56.8L441.4 58.5L446.3 59.3L450.5 61.4L454.6 58.5L459.5 56.0L464.5 54.3L469.5 52.7L475.2 53.5L480.2 56.0L484.3 59.3L487.6 62.6L488.4 67.5L486.8 70.8L488.4 73.3L485.1 74.1L483.5 77.4L480.2 79.9L476.1 81.6L472.8 79.9L469.5 76.6L467.0 73.3L466.2 77.4L462.8 79.9L457.9 80.8L452.9 79.9L448.0 80.8L443.0 81.6L438.9 80.8L436.4 76.6L433.1 77.4L429.8 79.9L425.7 78.3L422.4 75.8L419.1 72.5L417.4 68.4L416.6 62.6L417.4 56.8L415.8 51.8L414.1 46.9L412.5 41.9L410.8 37.8Z" fill="#a6a48b" stroke="#68788a" stroke-width=".9" stroke-opacity=".75" stroke-linejoin="round"/>
<path d="M487.6 51.0L489.3 47.7L491.8 45.2L492.2 47.7L490.1 51.5Z" fill="#a6a48b" stroke="#68788a" stroke-width=".9" stroke-opacity=".75" stroke-linejoin="round"/>
<path d="M440.6 -0.2L451.3 -0.2L452.6 7.3L455.4 10.9L459.5 12.2L464.5 9.7L467.8 4.8L469.8 -0.2L496.7 -0.2L496.2 8.9L492.6 13.0L488.4 15.5L482.7 14.7L478.5 11.4L476.1 13.9L479.4 16.3L482.7 18.8L487.6 18.0L490.1 19.6L491.8 23.8L495.9 26.3L497.0 30.4L493.4 34.5L489.3 37.8L484.3 41.1L481.0 43.6L478.5 39.5L475.2 35.3L471.9 31.2L467.8 34.5L463.7 37.0L462.0 32.9L461.2 37.8L457.9 40.3L453.8 37.8L448.8 38.6L445.5 35.3L442.2 32.0L439.7 37.0L438.1 36.2L436.4 28.7L434.8 31.2L433.1 37.0L431.5 34.5L430.6 28.4L427.3 29.1L428.5 25.4L432.3 23.8L436.4 21.8L441.4 20.8L445.5 19.6L446.7 16.3L443.9 12.2L441.4 7.3Z" fill="#a6a48b" stroke="#68788a" stroke-width=".9" stroke-opacity=".75" stroke-linejoin="round"/>
<path d="M432.3 149.9L430.6 145.0L429.5 138.4L429.8 131.8L431.5 123.5L433.1 115.3L435.6 107.0L438.9 100.6L443.9 97.3L449.6 96.1L456.2 96.4L457.1 98.9L453.8 103.0L451.3 108.8L449.6 114.6L448.8 122.0L449.6 128.5L451.3 133.4L454.6 138.4L456.7 142.5L453.3 145.8L449.3 148.3L454.6 147.5L458.7 146.6L459.5 140.9L457.9 135.1L455.4 130.1L457.1 126.0L460.9 129.3L458.7 122.7L455.4 118.9L458.7 115.6L461.5 114.9L457.1 112.0L454.6 107.0L457.9 106.3L462.0 102.2L467.0 99.4L472.8 98.1L477.7 99.7L479.4 104.7L480.2 110.5L482.7 115.4L483.5 119.4L481.0 122.7L479.4 126.0L480.7 131.8L483.5 126.8L486.8 123.5L490.9 125.2L492.6 131.8L494.2 126.8L496.7 124.3L499.2 126.8L495.9 122.7L497.5 119.4L501.7 117.7L507.4 119.4L511.6 122.7L514.9 126.8L512.4 130.9L509.9 135.9L513.2 131.8L517.3 130.1L519.0 134.3L515.7 139.2L514.9 144.2L518.2 139.2L521.5 136.7L524.0 140.9L526.4 138.4L531.4 139.2L535.5 142.5L538.0 146.6L533.9 148.3L529.7 151.6L533.0 150.8L537.2 151.6L534.7 156.5L533.0 161.5L536.3 157.4L540.5 154.1L545.4 153.2L549.6 155.7L552.0 159.8L547.9 162.3L543.8 165.6L548.7 164.0L553.7 162.3L557.0 164.8L558.6 168.9L554.5 170.6L549.6 173.1L555.3 173.1L559.5 175.5L560.6 178.8L556.2 179.7L551.2 180.5L547.9 183.8L552.0 184.6L556.2 187.9L559.5 191.2L562.8 194.5L561.9 197.8L566.1 197.0L569.4 200.3L572.7 202.8L576.0 206.1L578.5 208.6L581.8 209.4L585.1 212.7L589.2 215.2L591.7 219.3L589.2 222.6L585.9 225.1L582.6 229.2L580.1 232.5L579.3 239.1L571.0 239.1L568.5 230.0L565.2 225.1L561.9 221.0L559.5 219.3L557.8 223.4L555.3 221.0L552.0 224.3L554.5 229.2L557.0 239.1L520.7 239.1L519.0 230.9L522.3 224.3L525.6 217.7L528.1 212.7L529.2 206.1L528.1 199.5L525.6 193.7L523.1 189.6L519.0 186.3L515.7 182.1L512.4 184.6L509.1 187.1L507.4 183.0L509.9 179.7L507.4 175.5L503.3 172.2L500.0 168.1L497.5 164.0L494.2 159.8L490.9 156.5L489.3 159.8L491.8 164.0L489.3 167.3L485.1 168.9L481.0 167.3L476.9 164.8L481.0 168.1L476.1 167.3L471.1 166.5L466.2 166.1L461.2 165.6L456.2 164.0L451.3 164.8L448.8 161.5L445.5 163.2L443.0 159.8L438.9 159.0L435.6 155.7L433.1 151.6Z" fill="#a6a48b" stroke="#68788a" stroke-width=".9" stroke-opacity=".75" stroke-linejoin="round"/>
<path d="M481.0 99.7L484.3 97.8L489.3 98.1L495.1 100.6L500.0 104.7L504.1 108.8L507.4 113.0L504.1 114.6L499.2 115.4L494.2 116.6L489.3 117.1L486.8 113.8L484.3 108.8L482.7 104.7Z" fill="#a6a48b" stroke="#68788a" stroke-width=".9" stroke-opacity=".75" stroke-linejoin="round"/>
<path d="M501.7 204.4L502.5 198.7L505.0 194.5L509.1 192.9L513.2 194.5L514.0 200.3L512.4 206.1L508.3 208.6L504.1 208.6Z" fill="#a6a48b" stroke="#68788a" stroke-width=".9" stroke-opacity=".75" stroke-linejoin="round"/>
<path d="M515.7 197.8L519.8 197.0L523.1 198.7L520.7 201.1L516.5 200.3Z" fill="#a6a48b" stroke="#68788a" stroke-width=".9" stroke-opacity=".75" stroke-linejoin="round"/>
<path d="M490.1 183.8L492.6 179.7L495.1 176.4L496.7 178.0L494.2 182.1L491.8 185.0Z" fill="#a6a48b" stroke="#68788a" stroke-width=".9" stroke-opacity=".75" stroke-linejoin="round"/>
<path d="M500.0 178.0L501.7 175.5L504.1 177.2L502.5 180.5Z" fill="#a6a48b" stroke="#68788a" stroke-width=".9" stroke-opacity=".75" stroke-linejoin="round"/>
<path d="M493.4 172.2L495.9 170.6L497.5 171.7L495.1 173.9Z" fill="#a6a48b" stroke="#68788a" stroke-width=".9" stroke-opacity=".75" stroke-linejoin="round"/>
<path d="M535.5 -0.2L540.5 3.1L543.8 6.4L548.7 9.7L553.7 8.9L557.8 6.4L561.1 6.4L563.6 9.7L563.9 14.7L561.1 15.5L557.0 14.7L552.0 15.5L547.1 17.2L542.1 18.8L538.0 20.5L537.2 23.8L540.5 27.1L543.8 25.4L545.4 28.7L548.7 31.2L552.9 32.9L550.4 35.3L547.1 37.8L548.7 41.9L553.7 45.2L559.5 47.7L561.1 43.6L564.4 45.2L568.5 42.8L573.5 43.6L576.0 43.0L580.5 40.3L585.0 42.3L591.0 44.5L597.0 47.5L602.3 51.3L606.8 55.0L609.3 58.8L608.3 62.5L611.3 67.1L614.3 71.6L617.3 76.1L620.3 79.8L618.8 83.6L618.1 88.1L620.3 88.8L622.6 92.6L623.3 97.1L621.8 100.8L624.8 103.9L626.3 107.6L625.6 112.1L628.6 114.4L628.6 119.6L626.3 121.9L623.3 119.6L621.8 117.4L624.1 121.1L625.6 125.6L624.8 130.1L624.4 136.0L625.0 139.9L628.2 142.2L632.7 142.4L634.7 140.1L636.2 137.0L638.5 139.9L639.8 143.7L643.0 146.3L646.9 147.9L650.4 149.1L647.8 151.7L649.1 155.3L652.5 158.9L652.7 160.2L649.5 159.5L645.6 157.4L641.8 154.9L637.2 153.1L633.4 152.8L630.8 154.3L632.1 157.3L635.3 159.8L639.2 161.8L643.7 163.7L647.6 165.6L651.4 166.3L654.6 166.3L654.0 169.5L651.4 168.2L649.5 169.5L649.5 173.4L651.2 177.2L654.6 179.8L651.4 180.5L650.8 185.0L652.1 186.9L650.1 188.8L646.9 188.2L643.0 187.6L639.8 188.6L637.9 191.4L639.2 194.0L643.0 195.5L646.9 196.6L649.1 192.1L649.5 195.3L647.6 197.9L643.7 197.2L640.5 196.6L638.5 199.2L636.6 203.0L635.3 205.6L639.2 203.0L642.4 201.1L646.3 202.0L650.8 201.7L652.7 205.0L650.1 203.0L646.9 203.7L642.4 203.7L639.2 205.0L636.6 207.5L634.7 210.8L635.3 213.3L638.5 214.0L641.8 214.0L643.7 215.9L641.1 218.5L637.9 221.1L636.0 224.3L637.9 225.6L640.5 223.6L644.3 219.8L649.5 214.6L645.0 221.1L641.1 224.9L637.9 226.9L639.2 230.7L640.5 234.0L643.7 234.6L647.6 231.4L650.8 230.4L646.9 232.7L644.3 237.8L645.0 271.0L725.0 271.0L696.0 238.7L705.0 237.5L713.3 235.1L712.2 233.6L716.4 231.9L717.3 228.2L718.5 231.2L723.0 233.0L729.8 233.3L731.7 230.4L732.9 226.7L733.8 229.7L736.1 226.4L737.0 222.2L738.8 225.5L741.8 222.9L745.6 218.4L749.3 213.1L751.6 207.1L754.6 201.9L757.3 197.4L757.6 191.4L761.3 195.1L764.3 197.4L766.6 195.1L772.6 193.6L778.6 191.4L784.6 189.1L790.6 186.9L795.1 183.1L799.6 178.6L802.6 175.6L804.9 174.1L807.1 171.1L810.2 168.8L813.9 165.1L810.2 165.1L804.1 162.8L799.6 161.8L795.1 161.3L790.6 162.1L786.9 164.3L784.3 165.8L786.1 162.1L789.1 159.8L793.6 158.3L796.6 155.3L795.9 153.1L793.6 154.6L789.1 156.1L784.6 156.8L780.1 158.8L776.4 158.3L780.1 156.1L781.3 152.3L779.4 149.8L782.4 149.3L783.9 151.3L787.6 151.6L791.4 150.8L794.4 149.3L794.8 146.3L792.9 142.5L789.9 141.0L786.4 138.8L789.1 138.3L793.6 138.8L797.4 141.0L800.4 144.8L802.6 149.3L803.4 154.6L804.9 158.8L808.6 161.3L813.9 162.8L815.4 157.9L818.0 156.1L817.7 145.5L816.2 139.5L815.4 132.8L810.2 128.3L804.9 123.0L801.9 121.5L798.4 123.8L801.1 118.5L799.3 115.5L795.1 117.3L789.9 117.8L795.1 115.2L798.9 112.5L802.6 113.3L809.1 110.2L804.6 107.2L800.1 106.4L795.6 109.4L789.6 110.9L784.3 110.2L788.1 110.2L791.1 108.7L786.6 104.9L791.8 107.9L796.4 104.9L799.4 101.9L795.6 95.9L798.6 98.1L800.9 101.1L803.1 97.4L806.9 101.1L811.4 104.9L815.1 107.2L819.6 104.9L824.1 102.6L824.9 96.6L821.9 94.4L817.4 92.9L813.9 90.6L814.4 85.4L816.3 80.9L815.1 86.1L818.1 88.4L822.6 89.1L826.4 86.9L830.2 85.4L830.9 80.1L828.6 74.1L825.6 71.1L824.1 75.6L821.9 77.9L823.4 74.1L822.6 70.4L818.9 71.1L815.1 68.4L818.9 70.4L821.1 67.3L824.1 64.3L827.1 65.8L830.2 65.1L830.9 59.1L830.2 53.8L828.6 49.3L827.9 44.8L824.1 42.6L818.9 41.1L817.4 38.1L815.1 35.1L812.4 32.0L813.6 29.8L816.6 30.5L820.4 29.0L824.1 26.8L828.6 26.0L832.4 27.5L835.9 29.0L836.5 24.5L836.9 19.3L834.7 17.0L830.2 16.3L825.6 14.0L823.4 10.3L824.9 7.3L828.6 8.0L830.2 5.8L827.1 2.8L822.6 3.5L818.9 5.8L817.4 -0.2Z" fill="#96a3a2" stroke="#68788a" stroke-width=".9" stroke-opacity=".75" stroke-linejoin="round"/>
<path d="M833.9 63.6L839.2 62.8L841.4 68.1L839.9 71.1L834.7 70.4Z" fill="#96a3a2" stroke="#68788a" stroke-width=".9" stroke-opacity=".75" stroke-linejoin="round"/>
<path d="M838.4 2.0L840.4 1.7L839.9 5.8L838.0 7.3Z" fill="#96a3a2" stroke="#68788a" stroke-width=".9" stroke-opacity=".75" stroke-linejoin="round"/>
<path d="M528.9 13.0L532.2 12.2L534.2 14.7L531.4 15.5Z" fill="#96a3a2" stroke="#68788a" stroke-width=".9" stroke-opacity=".75" stroke-linejoin="round"/>
<path d="M628.9 165.6L630.2 162.4L633.4 161.1L637.2 162.4L641.1 165.0L644.3 168.2L645.4 172.1L643.7 175.3L639.8 177.2L636.0 178.5L633.4 176.6L634.7 174.7L632.1 174.0L629.5 171.4L628.5 168.2Z" fill="#96a3a2" stroke="#68788a" stroke-width=".9" stroke-opacity=".75" stroke-linejoin="round"/>
<path d="M634.9 145.3L636.2 144.8L637.2 146.3L636.2 147.9L634.9 147.3Z" fill="#96a3a2" stroke="#68788a" stroke-width=".9" stroke-opacity=".75" stroke-linejoin="round"/>
<path d="M889.1 150.9L894.7 146.0L895.7 148.3L890.5 152.6Z" fill="#a6a48b" stroke="#68788a" stroke-width=".9" stroke-opacity=".75" stroke-linejoin="round"/>
<path d="M802.4 233.7L805.7 230.4L808.2 224.6L811.5 221.3L815.6 223.8L818.1 229.6L819.8 233.7L823.1 234.5L825.5 227.9L828.8 231.2L833.0 225.4L836.3 229.6L839.6 226.3L843.7 225.4L847.0 221.3L849.5 219.6L853.6 223.8L856.9 222.9L857.8 227.9L861.9 232.9L863.5 237.8L861.9 242.8L857.8 246.1L854.4 250.2L849.5 252.7L843.7 256.0L838.8 258.5L833.8 261.4L828.8 260.1L824.7 257.6L819.8 255.2L812.3 256.0L814.8 251.8L817.3 247.7L814.8 244.4L809.9 243.6L804.9 243.6L809.0 241.1L815.6 240.3L818.1 237.0L814.8 234.5L809.0 234.5Z" fill="#a6a48b" stroke="#68788a" stroke-width=".9" stroke-opacity=".75" stroke-linejoin="round"/>
<path d="M970.1 276.6L973.4 274.1L979.1 274.1L979.1 321.2L973.4 319.6L971.7 313.0L972.5 306.3L970.1 299.7L969.2 291.5L970.9 284.9Z" fill="#939e88" stroke="#68788a" stroke-width=".9" stroke-opacity=".75" stroke-linejoin="round"/>
<path d="M970.2 310.0L978.2 310.0L978.2 319.0L974.2 317.0Z" fill="#939e88" stroke="#68788a" stroke-width=".9" stroke-opacity=".75" stroke-linejoin="round"/>
<path d="M932.9 298.1L934.5 294.0L936.5 293.5L935.4 298.1L934.2 303.0L932.9 301.4Z" fill="#939e88" stroke="#68788a" stroke-width=".9" stroke-opacity=".75" stroke-linejoin="round"/>
<path d="M922.2 313.0L924.6 310.5L926.3 311.3L923.8 315.4Z" fill="#939e88" stroke="#68788a" stroke-width=".9" stroke-opacity=".75" stroke-linejoin="round"/>
<path d="M900.1 324.0L904.1 320.0L905.7 322.0L903.1 327.0L901.1 329.0Z" fill="#939e88" stroke="#68788a" stroke-width=".9" stroke-opacity=".75" stroke-linejoin="round"/>
<path d="M903.5 331.0L906.1 330.0L907.1 334.0L904.5 335.0Z" fill="#939e88" stroke="#68788a" stroke-width=".9" stroke-opacity=".75" stroke-linejoin="round"/>
<path d="M904.1 347.0L910.1 346.0L910.5 349.0L905.1 350.0Z" fill="#939e88" stroke="#68788a" stroke-width=".9" stroke-opacity=".75" stroke-linejoin="round"/>
<path d="M912.1 322.0L916.1 319.0L921.1 318.0L919.1 324.0L924.1 328.0L930.1 329.0L928.1 335.0L925.1 341.0L921.1 344.0L927.1 346.0L931.1 351.1L934.1 359.1L938.2 365.1L941.2 371.1L944.2 376.1L949.2 378.1L950.6 383.1L948.2 388.1L944.2 391.1L947.2 394.1L944.2 397.1L936.2 398.1L928.1 399.1L922.1 397.1L917.1 400.1L911.1 402.1L914.1 398.1L920.1 393.1L925.1 390.1L920.1 388.1L915.1 387.1L912.1 385.1L917.1 381.1L921.1 378.1L916.1 377.1L920.1 373.1L923.1 369.1L924.1 364.1L922.1 359.1L917.1 358.1L914.1 355.1L913.1 350.0L911.1 345.0L907.1 341.0L909.1 336.0L911.1 330.0L909.1 326.0Z" fill="#939e88" stroke="#68788a" stroke-width=".9" stroke-opacity=".75" stroke-linejoin="round"/>
<path d="M883.1 365.1L887.1 363.1L892.1 360.1L893.1 356.1L898.1 353.1L904.1 354.1L908.1 358.1L909.1 364.1L906.1 366.1L909.1 371.1L908.1 377.1L904.1 383.1L898.1 386.1L892.1 388.1L886.1 389.1L883.1 386.1L885.1 381.1L882.1 377.1L884.1 371.1Z" fill="#a6a48b" stroke="#68788a" stroke-width=".9" stroke-opacity=".75" stroke-linejoin="round"/>
<path d="M893.1 356.1L898.1 353.1L904.1 354.1L908.1 358.1L909.1 364.1L905.1 365.1L900.1 363.5L896.1 361.1Z" fill="#939e88" stroke="#68788a" stroke-width=".9" stroke-opacity=".75" stroke-linejoin="round"/>
<path d="M914.1 415.1L924.1 413.1L931.1 412.1L936.2 407.1L944.2 405.1L949.2 402.1L956.2 405.1L964.2 407.1L978.2 411.1L978.2 453.0L968.2 456.0L962.2 459.0L959.2 466.0L956.2 464.6L946.2 463.0L936.2 461.0L932.1 458.6L933.1 451.0L934.1 447.2L932.1 439.2L929.1 431.2L924.1 425.1L918.1 421.1L915.1 418.1Z" fill="#8f8c9b" stroke="#68788a" stroke-width=".9" stroke-opacity=".75" stroke-linejoin="round"/>
<path d="M949.2 400.1L954.2 395.1L960.2 392.1L966.2 390.1L972.2 391.1L978.2 395.1L978.2 405.1L968.2 405.1L960.2 403.1L954.2 402.1Z" fill="#a6a48b" stroke="#68788a" stroke-width=".9" stroke-opacity=".75" stroke-linejoin="round"/>
<path d="M964.2 389.1L967.2 379.1L971.2 372.1L978.2 370.1L978.2 393.1L972.2 391.1L968.2 390.1Z" fill="#96a3a2" stroke="#68788a" stroke-width=".9" stroke-opacity=".75" stroke-linejoin="round"/>
<path d="M889.1 460.0L892.1 456.0L900.1 455.0L910.1 457.0L920.1 457.4L932.1 458.6L936.2 461.0L946.2 463.0L956.2 464.6L959.2 467.0L956.2 472.0L950.2 475.0L944.2 480.0L941.2 486.1L942.2 493.1L937.2 498.1L933.1 502.1L927.1 505.1L920.1 506.7L914.1 508.1L910.1 510.1L906.1 507.1L902.1 504.1L899.1 501.1L900.1 497.1L904.1 491.1L903.1 484.1L904.1 477.0L905.1 470.0L902.1 468.0L896.1 468.0L891.1 467.0L890.1 463.0Z" fill="#a6a48b" stroke="#68788a" stroke-width=".9" stroke-opacity=".75" stroke-linejoin="round"/>
<path d="M891.1 467.0L896.1 468.0L902.1 468.0L905.1 470.0L904.1 477.0L903.1 484.1L904.1 491.1L900.1 497.1L899.1 501.1L895.1 503.1L891.1 502.1L892.1 495.1L890.1 491.1L891.7 484.1L892.1 477.0L891.7 471.0Z" fill="#939e88" stroke="#68788a" stroke-width=".9" stroke-opacity=".75" stroke-linejoin="round"/>
<path d="M955.2 485.1L958.2 483.5L960.6 486.1L958.2 488.7L955.8 487.5Z" fill="#a6a48b" stroke="#68788a" stroke-width=".9" stroke-opacity=".75" stroke-linejoin="round"/>
<path d="M963.2 483.1L965.2 482.7L965.2 484.7Z" fill="#a6a48b" stroke="#68788a" stroke-width=".9" stroke-opacity=".75" stroke-linejoin="round"/>
<path d="M948.2 490.1L950.2 489.5L950.6 491.5Z" fill="#a6a48b" stroke="#68788a" stroke-width=".9" stroke-opacity=".75" stroke-linejoin="round"/>
<path d="M876.1 571.0L978.2 540.9L978.2 691.1L906.1 691.1L866.1 651.1L856.1 621.0Z" fill="#939e88"/>
<path d="M931.1 521.1L928.1 518.7L936.2 513.1L946.2 509.1L956.2 507.1L966.2 505.5L978.2 506.1L978.2 601.2L978.2 617.0L965.2 621.0L936.2 601.0L891.1 571.2L892.1 561.2L900.1 557.1L906.1 556.1L910.1 553.1L914.1 550.1L920.1 548.1L919.1 545.1L922.1 542.1L928.1 540.1L934.1 539.1L935.1 535.1L932.1 529.1Z" fill="#96a3a2" stroke="#68788a" stroke-width=".9" stroke-opacity=".75" stroke-linejoin="round"/>
<path d="M904.1 518.1L910.1 517.1L918.1 518.1L928.1 518.7L931.1 521.1L932.1 529.1L935.1 535.1L934.1 539.1L928.1 540.1L922.1 542.1L919.1 545.1L920.1 548.1L914.1 550.1L910.1 553.1L906.1 556.1L900.1 557.1L892.1 561.2L891.1 571.2L873.1 579.2L872.1 597.2L866.1 598.2L866.1 607.0L846.0 608.0L844.0 601.0L848.0 601.0L851.0 595.2L855.0 589.2L858.1 581.2L862.1 575.2L868.1 569.2L876.1 565.2L883.1 561.2L886.1 553.1L885.1 545.1L887.1 539.1L891.1 535.1L896.1 531.1L901.1 527.1L904.1 522.1Z" fill="#8f8c9b" stroke="#68788a" stroke-width=".9" stroke-opacity=".75" stroke-linejoin="round"/>
<path d="M846.0 608.0L866.1 607.0L866.1 598.2L872.1 597.2L873.1 579.2L891.1 571.2L904.1 581.2L904.1 601.0L906.1 621.0L910.1 641.1L876.1 642.1L873.1 646.1L869.1 642.1L863.1 638.0L856.1 636.0L849.0 637.0L846.0 639.0L848.0 633.0L849.0 625.0L848.0 617.0L845.0 609.0Z" fill="#a6a48b" stroke="#68788a" stroke-width=".9" stroke-opacity=".75" stroke-linejoin="round"/>
<path d="M904.1 585.2L910.1 584.8L936.2 601.0L965.2 621.0L965.2 637.0L960.2 644.1L946.2 646.1L936.2 647.1L928.1 651.1L918.1 656.1L912.1 661.1L910.1 667.1L906.1 672.1L900.1 671.1L895.1 672.1L893.1 667.1L890.1 661.1L884.1 661.1L876.1 661.1L875.1 655.1L876.1 642.1L910.1 641.1L906.1 621.0L904.1 601.0Z" fill="#939e88" stroke="#68788a" stroke-width=".9" stroke-opacity=".75" stroke-linejoin="round"/>
<path d="M965.2 621.0L978.2 616.6L978.2 653.1L970.2 653.1L964.2 657.1L961.2 651.1L960.2 644.1L965.2 637.0Z" fill="#a6a48b" stroke="#68788a" stroke-width=".9" stroke-opacity=".75" stroke-linejoin="round"/>
<path d="M841.0 644.1L845.0 639.0L849.0 637.0L856.1 636.0L863.1 638.0L869.1 642.1L873.1 646.1L875.1 655.1L876.1 661.1L868.1 660.1L860.1 659.1L852.0 660.1L846.0 659.1L842.0 654.1L839.0 649.1Z" fill="#96a3a2" stroke="#68788a" stroke-width=".9" stroke-opacity=".75" stroke-linejoin="round"/>
<path d="M846.0 659.1L852.0 660.1L860.1 659.1L863.1 661.1L858.1 665.1L853.0 668.1L849.0 665.1Z" fill="#939e88" stroke="#68788a" stroke-width=".9" stroke-opacity=".75" stroke-linejoin="round"/>
<path d="M863.1 661.1L868.1 660.1L876.1 661.1L884.1 661.1L890.1 661.1L893.1 667.1L895.1 672.1L896.1 678.1L895.1 685.1L893.1 689.1L889.1 690.1L887.1 684.1L883.1 683.1L880.1 679.1L874.1 678.1L869.1 680.1L865.1 684.1L861.1 678.1L856.1 672.1L853.0 668.1L858.1 665.1Z" fill="#a6a48b" stroke="#68788a" stroke-width=".9" stroke-opacity=".75" stroke-linejoin="round"/>
<path d="M865.1 684.1L869.1 680.1L874.1 678.1L880.1 679.1L881.1 684.1L877.1 689.1L874.1 694.1L869.1 689.1Z" fill="#939e88" stroke="#68788a" stroke-width=".9" stroke-opacity=".75" stroke-linejoin="round"/>
<path d="M874.1 694.1L877.1 689.1L881.1 684.1L883.1 683.1L887.1 684.1L889.1 690.1L893.1 689.1L894.1 695.1L900.1 701.1L897.1 706.1L891.1 704.1L884.1 701.1L878.1 698.1Z" fill="#96a3a2" stroke="#68788a" stroke-width=".9" stroke-opacity=".75" stroke-linejoin="round"/>
<path d="M895.1 672.1L900.1 671.1L906.1 672.1L910.1 676.1L918.1 675.1L925.1 676.1L926.1 685.1L924.1 693.1L925.1 702.1L920.1 702.1L912.1 702.7L904.1 704.1L897.1 706.1L900.1 701.1L894.1 695.1L893.1 689.1L895.1 685.1L896.1 678.1Z" fill="#8f8c9b" stroke="#68788a" stroke-width=".9" stroke-opacity=".75" stroke-linejoin="round"/>
<path d="M910.1 667.1L912.1 661.1L918.1 656.1L928.1 651.1L936.2 647.1L946.2 646.1L960.2 644.1L961.2 651.1L964.2 657.1L956.2 661.1L952.2 665.1L946.2 668.1L936.2 669.1L925.1 670.1L925.1 676.1L918.1 675.1L910.1 676.1L906.1 672.1Z" fill="#96a3a2" stroke="#68788a" stroke-width=".9" stroke-opacity=".75" stroke-linejoin="round"/>
<path d="M925.1 670.1L936.2 669.1L941.2 669.1L944.2 677.1L946.2 687.1L947.2 695.1L944.2 698.1L936.2 700.1L928.1 702.1L925.1 702.1L924.1 693.1L926.1 685.1L925.1 676.1Z" fill="#939e88" stroke="#68788a" stroke-width=".9" stroke-opacity=".75" stroke-linejoin="round"/>
<path d="M941.2 669.1L946.2 668.1L948.2 677.1L950.2 687.1L950.6 696.7L947.2 698.1L947.2 695.1L946.2 687.1L944.2 677.1Z" fill="#a6a48b" stroke="#68788a" stroke-width=".9" stroke-opacity=".75" stroke-linejoin="round"/>
<path d="M946.2 668.1L952.2 665.1L956.2 661.1L962.2 665.1L963.2 673.1L959.2 679.1L957.2 687.1L956.2 696.1L950.6 696.7L950.2 687.1L948.2 677.1Z" fill="#8f8c9b" stroke="#68788a" stroke-width=".9" stroke-opacity=".75" stroke-linejoin="round"/>
<path d="M956.2 661.1L964.2 657.1L970.2 653.1L978.2 653.1L978.2 709.1L971.2 701.1L966.2 696.1L960.2 695.1L956.2 696.1L957.2 687.1L959.2 679.1L963.2 673.1L962.2 665.1Z" fill="#939e88" stroke="#68788a" stroke-width=".9" stroke-opacity=".75" stroke-linejoin="round"/>
<path d="M838.0 560.5L840.0 560.3L840.2 561.8L838.2 562.0Z" fill="#a6a48b" stroke="#68788a" stroke-width=".9" stroke-opacity=".75" stroke-linejoin="round"/>
<path d="M845.0 563.0L847.0 562.8L847.2 564.2L845.2 564.4Z" fill="#a6a48b" stroke="#68788a" stroke-width=".9" stroke-opacity=".75" stroke-linejoin="round"/>
<path d="M851.0 565.6L853.0 565.4L853.2 566.8L851.2 567.0Z" fill="#a6a48b" stroke="#68788a" stroke-width=".9" stroke-opacity=".75" stroke-linejoin="round"/>
<path d="M860.1 561.6L862.1 561.4L862.3 562.8L860.3 563.0Z" fill="#a6a48b" stroke="#68788a" stroke-width=".9" stroke-opacity=".75" stroke-linejoin="round"/>
<path d="M843.0 533.5L845.0 533.3L845.2 534.7L843.2 534.9Z" fill="#a6a48b" stroke="#68788a" stroke-width=".9" stroke-opacity=".75" stroke-linejoin="round"/>
<path d="M468.2 674.6L489.2 674.6L495.4 679.6L500.4 684.5L497.9 688.3L492.9 684.5L488.0 683.3L483.0 687.0L478.1 688.3L473.1 683.3L469.4 679.6Z" fill="#939e88" stroke="#68788a" stroke-width=".9" stroke-opacity=".75" stroke-linejoin="round"/>
<path d="M509.0 674.6L526.4 674.6L528.9 683.3L533.8 690.7L540.0 692.0L548.7 695.7L556.1 698.2L555.6 705.6L558.6 714.3L557.4 720.5L551.2 722.4L543.7 723.4L546.2 727.9L542.5 732.8L545.0 740.3L543.7 746.5L542.5 755.1L538.8 753.9L540.0 747.7L533.8 746.5L527.6 745.2L521.4 741.5L516.5 736.6L511.5 732.8L504.1 727.9L496.7 724.9L491.7 722.9L495.4 716.7L499.1 708.1L500.4 700.6L499.1 693.2L501.6 685.8L504.1 680.8Z" fill="#a6a48b" stroke="#68788a" stroke-width=".9" stroke-opacity=".75" stroke-linejoin="round"/>
<path d="M526.4 674.6L593.3 674.6L595.8 680.8L600.7 683.3L595.8 689.5L592.0 695.7L593.3 700.6L598.2 703.1L595.8 706.8L588.3 708.1L580.9 709.3L574.7 708.1L573.5 713.0L578.4 719.2L575.9 722.9L569.7 726.6L563.5 725.9L559.8 721.7L557.4 720.5L558.6 714.3L555.6 705.6L556.1 698.2L548.7 695.7L540.0 692.0L533.8 690.7L528.9 683.3Z" fill="#96a3a2" stroke="#68788a" stroke-width=".9" stroke-opacity=".75" stroke-linejoin="round"/>
<path d="M530.1 675.9L535.1 674.6L536.3 679.6L532.6 681.3Z" fill="#6e88a9"/>
<path d="M600.7 683.3L606.9 688.3L613.1 694.4L615.6 698.2L614.3 704.4L616.8 710.5L615.6 716.7L618.0 720.5L613.1 722.9L606.9 724.2L601.9 720.5L599.5 714.3L600.7 709.3L595.8 706.8L598.2 703.1L593.3 700.6L592.0 695.7L595.8 689.5Z" fill="#8f8c9b" stroke="#68788a" stroke-width=".9" stroke-opacity=".75" stroke-linejoin="round"/>
<path d="M615.6 698.2L623.0 697.7L631.7 698.7L632.9 704.4L631.7 710.5L632.9 716.7L628.0 719.2L623.0 720.5L618.0 720.5L615.6 716.7L616.8 710.5L614.3 704.4Z" fill="#a6a48b" stroke="#68788a" stroke-width=".9" stroke-opacity=".75" stroke-linejoin="round"/>
<path d="M631.7 698.7L637.9 700.6L644.1 705.6L645.3 710.5L640.3 716.7L636.6 719.2L632.9 716.7L631.7 710.5L632.9 704.4Z" fill="#8f8c9b" stroke="#68788a" stroke-width=".9" stroke-opacity=".75" stroke-linejoin="round"/>
<path d="M542.5 732.8L546.2 727.9L543.7 723.4L551.2 722.4L557.4 720.5L559.8 721.7L563.5 725.9L569.7 726.6L575.9 722.9L578.4 719.2L573.5 713.0L574.7 708.1L580.9 709.3L588.3 708.1L595.8 706.8L600.7 709.3L599.5 714.3L601.9 720.5L606.9 724.2L613.1 722.9L618.0 720.5L623.0 720.5L628.0 719.2L632.9 716.7L636.6 719.2L640.3 716.7L645.3 710.5L649.0 709.3L652.7 715.5L656.4 722.9L654.0 729.1L650.3 732.8L646.5 739.0L642.8 740.8L649.0 737.8L652.7 734.1L657.7 731.6L663.9 734.1L665.1 740.3L660.2 744.0L667.6 736.6L675.0 737.8L684.9 740.3L687.4 747.7L694.8 746.5L709.7 747.7L709.7 775.0L523.9 775.0L526.4 765.0L533.8 760.1L540.0 756.4L542.5 755.1L543.7 746.5L545.0 740.3Z" fill="#939e88" stroke="#68788a" stroke-width=".9" stroke-opacity=".75" stroke-linejoin="round"/>
<path d="M491.7 722.9L496.7 724.9L504.1 727.9L511.5 732.8L514.0 737.8L509.0 742.8L504.1 747.7L497.9 750.2L492.9 755.1L489.2 757.6L484.3 758.9L481.8 753.9L485.5 748.9L483.0 742.8L484.3 735.3L488.0 729.1Z" fill="#939e88" stroke="#68788a" stroke-width=".9" stroke-opacity=".75" stroke-linejoin="round"/>
<path d="M514.0 737.8L516.5 736.6L521.4 741.5L527.6 745.2L533.8 746.5L540.0 747.7L538.8 753.9L542.5 755.1L540.0 756.4L533.8 760.1L526.4 765.0L523.9 775.0L484.3 775.0L479.3 762.6L484.3 758.9L489.2 757.6L492.9 755.1L497.9 750.2L504.1 747.7L509.0 742.8Z" fill="#96a3a2" stroke="#68788a" stroke-width=".9" stroke-opacity=".75" stroke-linejoin="round"/>
<path d="M419.9 732.8L423.6 731.6L426.1 735.3L422.3 736.6Z" fill="#a6a48b" stroke="#68788a" stroke-width=".9" stroke-opacity=".75" stroke-linejoin="round"/>
<path d="M54.5 615.0L57.5 614.5L59.5 618.0L57.0 621.0L54.5 619.0Z" fill="#a6a48b" stroke="#68788a" stroke-width=".9" stroke-opacity=".75" stroke-linejoin="round"/>
<path d="M48.0 609.0L50.5 609.2L50.0 611.0L48.0 610.5Z" fill="#a6a48b" stroke="#68788a" stroke-width=".9" stroke-opacity=".75" stroke-linejoin="round"/>
<path d="M41.5 605.5L43.5 606.0L43.0 607.5Z" fill="#a6a48b" stroke="#68788a" stroke-width=".9" stroke-opacity=".75" stroke-linejoin="round"/>
<path d="M32.5 603.0L34.5 603.0L34.0 604.5Z" fill="#a6a48b" stroke="#68788a" stroke-width=".9" stroke-opacity=".75" stroke-linejoin="round"/>
<g font-size="9.3" font-style="italic" font-family="DejaVu Sans, Liberation Sans, sans-serif" stroke-linejoin="round" opacity=".97">
<text x="115.0" y="121.2" fill="#22397c" stroke="#8fa3c0" stroke-width="1.4" paint-order="stroke" stroke-opacity=".35" textLength="65.0" lengthAdjust="spacing">Beaufort&#160;&#160;Sea</text>
<text x="311.7" y="109.4" fill="#22397c" stroke="#8fa3c0" stroke-width="1.4" paint-order="stroke" stroke-opacity=".35" textLength="137.7" lengthAdjust="spacing">The North Western Passages</text>
<text x="530.0" y="91.8" fill="#22397c" stroke="#8fa3c0" stroke-width="1.4" paint-order="stroke" stroke-opacity=".35" textLength="46.8" lengthAdjust="spacing">Baffin Bay</text>
<text x="680.7" y="82.2" fill="#3b3b3a" stroke="#c4c4b8" stroke-width="1.4" paint-order="stroke" stroke-opacity=".35" textLength="48.9" lengthAdjust="spacing">Greenland</text>
<text x="11.0" y="194.6" fill="#22397c" stroke="#8fa3c0" stroke-width="1.4" paint-order="stroke" stroke-opacity=".35" text-anchor="end">Chukchi Sea</text>
<text x="55.9" y="336.3" fill="#22397c" stroke="#8fa3c0" stroke-width="1.4" paint-order="stroke" stroke-opacity=".35" textLength="62.0" lengthAdjust="spacing">Gulf of Alaska</text>
<text x="818.9" y="246.4" fill="#3b3b3a" stroke="#c4c4b8" stroke-width="1.4" paint-order="stroke" stroke-opacity=".35" textLength="32.6" lengthAdjust="spacing">Iceland</text>
<text x="933.7" y="352.6" fill="#22397c" stroke="#8fa3c0" stroke-width="1.4" paint-order="stroke" stroke-opacity=".35" textLength="44.5" lengthAdjust="spacing">North Sea</text>
<text x="877.7" y="378.1" fill="#3b3b3a" stroke="#c4c4b8" stroke-width="1.4" paint-order="stroke" stroke-opacity=".35" textLength="32.4" lengthAdjust="spacing">Ireland</text>
<text x="885.5" y="442.2" fill="#22397c" stroke="#8fa3c0" stroke-width="1.4" paint-order="stroke" stroke-opacity=".35" textLength="62.7" lengthAdjust="spacing">Bay of Biscay</text>
<text x="949.8" y="401.5" fill="#3b3b3a" stroke="#c4c4b8" stroke-width="1.4" paint-order="stroke" stroke-opacity=".35" textLength="36.0" lengthAdjust="spacing">Belgium</text>
<text x="960.2" y="436.1" fill="#3b3b3a" stroke="#c4c4b8" stroke-width="1.4" paint-order="stroke" stroke-opacity=".35" textLength="52.0" lengthAdjust="spacing">Switzerland</text>
<text x="964.6" y="458.4" fill="#3b3b3a" stroke="#c4c4b8" stroke-width="1.4" paint-order="stroke" stroke-opacity=".35" textLength="34.0" lengthAdjust="spacing">Monaco</text>
<text x="872.7" y="491.0" fill="#3b3b3a" stroke="#c4c4b8" stroke-width="1.4" paint-order="stroke" stroke-opacity=".35" textLength="39.0" lengthAdjust="spacing">Portugal</text>
<text x="890.1" y="516.7" fill="#3b3b3a" stroke="#c4c4b8" stroke-width="1.4" paint-order="stroke" stroke-opacity=".35" textLength="40.0" lengthAdjust="spacing">Gibraltar</text>
<text x="756.0" y="528.9" fill="#22397c" stroke="#8fa3c0" stroke-width="1.4" paint-order="stroke" stroke-opacity=".35" textLength="28.7" lengthAdjust="spacing">OCEAN</text>
<text x="865.0" y="560.7" fill="#3b3b3a" stroke="#c4c4b8" stroke-width="1.4" paint-order="stroke" stroke-opacity=".35" textLength="39.5" lengthAdjust="spacing">Morocco</text>
<text x="940.1" y="569.2" fill="#3b3b3a" stroke="#c4c4b8" stroke-width="1.4" paint-order="stroke" stroke-opacity=".35" textLength="31.5" lengthAdjust="spacing">Algeria</text>
<text x="857.6" y="618.6" fill="#3b3b3a" stroke="#c4c4b8" stroke-width="1.4" paint-order="stroke" stroke-opacity=".35" textLength="48.5" lengthAdjust="spacing">Mauritania</text>
<text x="911.1" y="635.4" fill="#3b3b3a" stroke="#c4c4b8" stroke-width="1.4" paint-order="stroke" stroke-opacity=".35" textLength="18.6" lengthAdjust="spacing">Mali</text>
<text x="776.0" y="645.4" fill="#3b3b3a" stroke="#c4c4b8" stroke-width="1.4" paint-order="stroke" stroke-opacity=".35" textLength="55.5" lengthAdjust="spacing">Cape Verde</text>
<text x="838.6" y="654.0" fill="#3b3b3a" stroke="#c4c4b8" stroke-width="1.4" paint-order="stroke" stroke-opacity=".35" textLength="38.5" lengthAdjust="spacing">Senegal</text>
<text x="901.1" y="658.5" fill="#3b3b3a" stroke="#c4c4b8" stroke-width="1.4" paint-order="stroke" stroke-opacity=".35" textLength="60.7" lengthAdjust="spacing">Burkina Faso</text>
<text x="861.7" y="677.5" fill="#3b3b3a" stroke="#c4c4b8" stroke-width="1.4" paint-order="stroke" stroke-opacity=".35" textLength="32.8" lengthAdjust="spacing">Guinea</text>
<text x="934.5" y="688.1" fill="#3b3b3a" stroke="#c4c4b8" stroke-width="1.4" paint-order="stroke" stroke-opacity=".35" textLength="23.3" lengthAdjust="spacing">Togo</text>
<text x="970.6" y="682.0" fill="#3b3b3a" stroke="#c4c4b8" stroke-width="1.4" paint-order="stroke" stroke-opacity=".35" textLength="32.0" lengthAdjust="spacing">Nigeria</text>
<text x="873.7" y="703.1" fill="#3b3b3a" stroke="#c4c4b8" stroke-width="1.4" paint-order="stroke" stroke-opacity=".35" textLength="30.4" lengthAdjust="spacing">Liberia</text>
<text x="915.1" y="722.1" fill="#22397c" stroke="#8fa3c0" stroke-width="1.4" paint-order="stroke" stroke-opacity=".35" textLength="64.0" lengthAdjust="spacing">Gulf of Guinea</text>
<text x="437.2" y="680.8" fill="#3b3b3a" stroke="#c4c4b8" stroke-width="1.4" paint-order="stroke" stroke-opacity=".35" textLength="48.3" lengthAdjust="spacing">Costa Rica</text>
<text x="540.0" y="695.7" fill="#3b3b3a" stroke="#c4c4b8" stroke-width="1.4" paint-order="stroke" stroke-opacity=".35" textLength="48.3" lengthAdjust="spacing">Venezuela</text>
<text x="599.5" y="713.5" fill="#3b3b3a" stroke="#c4c4b8" stroke-width="1.4" paint-order="stroke" stroke-opacity=".35" textLength="44.5" lengthAdjust="spacing">Suriname</text>
<text x="503.6" y="722.9" fill="#3b3b3a" stroke="#c4c4b8" stroke-width="1.4" paint-order="stroke" stroke-opacity=".35" textLength="42.6" lengthAdjust="spacing">Colombia</text>
<text x="472.4" y="745.2" fill="#3b3b3a" stroke="#c4c4b8" stroke-width="1.4" paint-order="stroke" stroke-opacity=".35" textLength="39.1" lengthAdjust="spacing">Ecuador</text>
<text x="2.8" y="739.0" fill="#3b3b3a" stroke="#c4c4b8" stroke-width="1.4" paint-order="stroke" stroke-opacity=".35" textLength="54.2" lengthAdjust="spacing">Jarvis Island</text>
<text x="7.7" y="639.4" fill="#3b3b3a" stroke="#c4c4b8" stroke-width="1.4" paint-order="stroke" stroke-opacity=".35" text-anchor="end">Johnston Atoll</text>
</g>
<rect x="923.7" y="401.2" width="60" height="10.8" fill="#d9d6dc" fill-opacity=".85"/>
<g font-family="Liberation Sans, Arial, sans-serif" font-weight="bold" font-size="12" fill="#b8142f"><text x="924.2" y="410.9">C</text><text x="931.9" y="410.9">Suzuki</text><text x="971.0" y="410.9" fill="#8a4a8a" fill-opacity=".6">i</text></g>
</svg>
 <div class="mbtn" style="top:16px"></div>
 <div class="mbtn" style="top:56px"></div>
 <div class="mbtn" style="top:96px"></div>
</div>
<svg class="ic" style="left:250px;top:45px" width="27" height="27" viewBox="0 0 27 27"><circle cx="12.4" cy="12" r="4.3" fill="none" stroke="#474747" stroke-width="1.1"/><path d="M15.6 15.2L19.4 19" stroke="#474747" stroke-width="1.4"/></svg><svg class="ic" style="left:250px;top:85px" width="27" height="27" viewBox="0 0 27 27"><path d="M6.2 13.3C9 9.4 17.8 9.4 20.8 13.3C17.8 17.2 9 17.2 6.2 13.3Z" fill="none" stroke="#474747" stroke-width="1"/><circle cx="13.4" cy="12.8" r="2.5" fill="#474747"/><circle cx="12.7" cy="12" r="0.8" fill="#b0b0b0"/></svg><svg class="ic" style="left:250px;top:125px" width="27" height="27" viewBox="0 0 27 27"><path d="M5.8 8.8L10.4 7.2V18.4L5.8 20ZM11.3 7.2L15.3 8.8V20L11.3 18.4ZM16.2 8.8L20.8 7.2V18.4L16.2 20Z" fill="#474747"/></svg>
<div id="dlg">
 <h1>Nueva notificación</h1><svg id="cls" viewBox="0 0 9 9"><path d="M1 1L8 8M8 1L1 8" stroke="#111" stroke-width=".95"/></svg>
 <div id="body">
  <div id="sec">Conductor</div>
  <div id="t1">Asignar</div><div id="t2">Separar</div><div id="tl"></div>
  <div id="lbl">Código de conductor:</div>
  <div id="inp">4536, 13*, 463%77</div>
  <div class="btn" style="left:398px">Cancelar</div>
  <div class="btn" style="left:473px">Atrás</div>
  <div class="btn pri" style="left:548px">Siguiente</div>
 </div>
</div>
</body></html>
